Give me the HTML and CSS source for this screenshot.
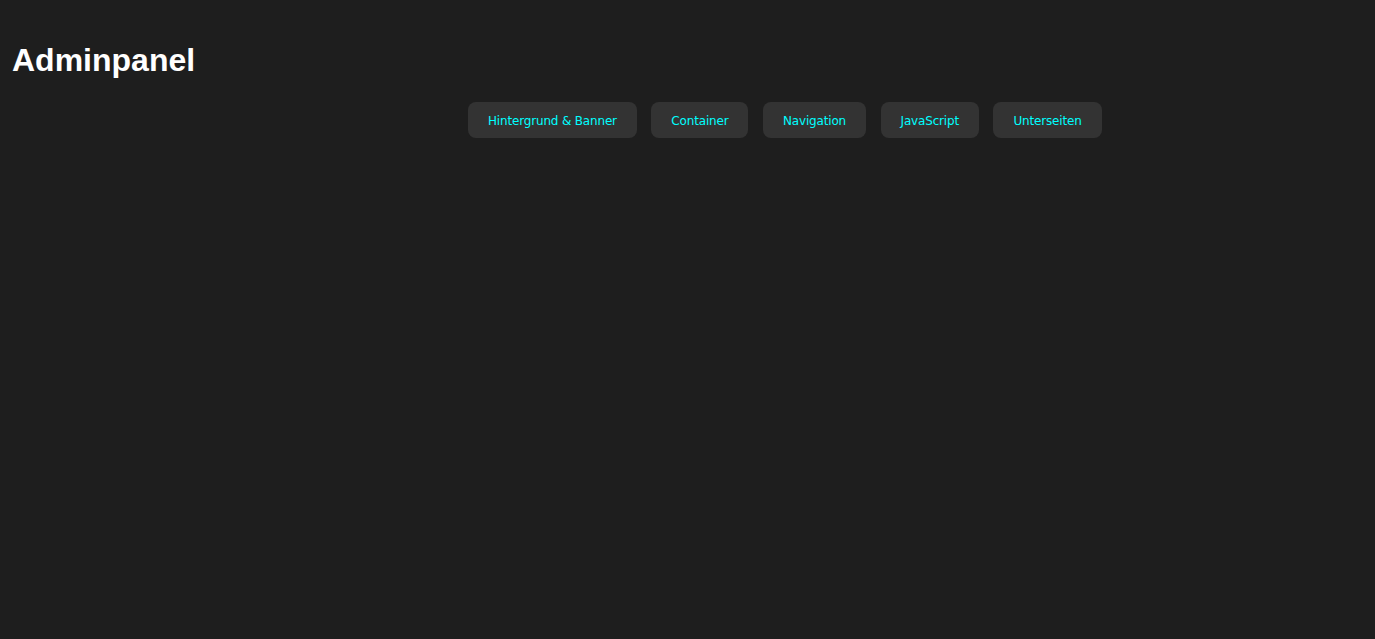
FILE: index.html
```html
<!DOCTYPE html>
<html lang="de">
<head>
<meta charset="utf-8">
<title>Adminpanel</title>
<link rel="stylesheet" href="styles.css">
</head>
<body>
<h1 class="title">Adminpanel</h1>
<nav class="tabs">
  <button class="tab">Hintergrund &amp; Banner</button>
  <button class="tab">Container</button>
  <button class="tab">Navigation</button>
  <button class="tab">JavaScript</button>
  <button class="tab">Unterseiten</button>
</nav>
</body>
</html>
```
FILE: styles.css
```css
html, body {
  margin: 0;
  padding: 0;
  background: #1e1e1e;
  height: 100%;
}
body {
  padding: 42px 12px 0 12px;
  box-sizing: border-box;
  font-family: "Liberation Sans", Arial, sans-serif;
}
.title {
  margin: 0;
  font-size: 32px;
  font-weight: bold;
  color: #ffffff;
  line-height: 37px;
}
.tabs {
  display: flex;
  gap: 14.5px;
  margin-top: 23px;
  margin-left: 456px;
}
.tab {
  font-family: "DejaVu Sans", Verdana, sans-serif;
  font-size: 12px;
  letter-spacing: -0.17px;
  line-height: 14px;
  color: #00ffff;
  background: #333333;
  border: none;
  border-radius: 8px;
  padding: 12px 20px 10px;
  cursor: pointer;
}
```
